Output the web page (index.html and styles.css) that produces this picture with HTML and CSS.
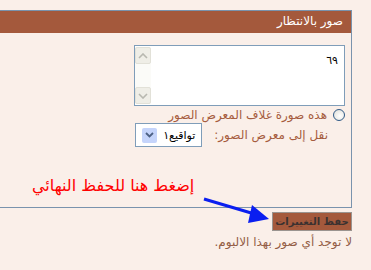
FILE: index.html
```html
<!DOCTYPE html>
<html lang="ar" dir="rtl">
<head>
  <meta charset="UTF-8">
  <title>صور بالانتظار</title>
  <link rel="stylesheet" href="styles.css">
</head>
<body>

<div class="panel">
  <div class="head">صور بالانتظار</div>
  <div class="content">

    <div class="textbox">
      <div class="text">٦٩</div>
      <div class="scroll">
        <span class="sbtn">
          <svg width="10" height="6" viewBox="0 0 10 6"><path d="M1 5 L5 1 L9 5" fill="none" stroke="#b8b8b0" stroke-width="1.6"/></svg>
        </span>
        <span class="sbtn">
          <svg width="10" height="6" viewBox="0 0 10 6"><path d="M1 1 L5 5 L9 1" fill="none" stroke="#b8b8b0" stroke-width="1.6"/></svg>
        </span>
      </div>
    </div>

    <div class="cover">
      <span class="radio"></span>
      <span class="label">هذه صورة غلاف المعرض الصور</span>
    </div>

    <div class="move">
      <span class="label">نقل إلى معرض الصور:</span>
      <div class="select">
        <span class="opt">تواقيع١</span>
        <span class="drop">
          <svg width="9" height="6" viewBox="0 0 9 6"><path d="M1 1 L4.5 4.5 L8 1" fill="none" stroke="#4d6185" stroke-width="1.8"/></svg>
        </span>
      </div>
    </div>

    <div class="note">إضغط هنا للحفظ النهائي</div>
  </div>
</div>

<svg class="arrow" width="80" height="30" viewBox="0 0 80 30">
  <line x1="2" y1="2" x2="56" y2="18" stroke="#0a1ef0" stroke-width="3"/>
  <polygon points="50,8 67,22 46,26" fill="#0a1ef0"/>
</svg>

<div class="actions">
  <button class="save">حفظ التغييرات</button>
</div>
<p class="empty">لا توجد أي صور بهذا الالبوم.</p>

</body>
</html>
```

FILE: styles.css
```css
body {
  margin: 0;
  background-color: #faefe9;
  font-family: "DejaVu Sans", sans-serif;
  font-size: 12px;
  width: 371px;
  position: relative;
}
.panel {
  margin-top: 10px;
  margin-right: 19px;
  border-top: 1px solid #7a93ad;
  border-right: 1px solid #7a93ad;
  border-bottom: 1px solid #7a93ad;
}
.head {
  height: 22px;
  line-height: 21px;
  background-color: #a4593c;
  color: #ffffff;
  padding-right: 8px;
}
.content {
  padding: 12px 6px 12px 0;
}
.textbox {
  width: 209px;
  height: 59px;
  border: 1px solid #7f9db9;
  background: #ffffff;
  display: flex;
}
.text {
  flex: 1;
  padding: 8px 6px 0 0;
  font-size: 11px;
}
.scroll {
  width: 16px;
  margin: 1px 1px 1px 0;
  background: #fbfbf8;
  display: flex;
  flex-direction: column;
  justify-content: space-between;
}
.sbtn {
  height: 15px;
  background: #efeee7;
  border: 1px solid #e2e1d8;
  border-radius: 2px;
  display: flex;
  align-items: center;
  justify-content: center;
}
.cover {
  display: flex;
  align-items: center;
  gap: 6px;
  margin-top: 1px;
  height: 16px;
}
.radio {
  width: 10px;
  height: 10px;
  border: 1px solid #2f5a87;
  border-radius: 50%;
  background: radial-gradient(circle at 60% 60%, #ffffff, #dcdcd6);
}
.label {
  color: #a65c3e;
  font-size: 12px;
}
.move {
  display: flex;
  align-items: center;
  gap: 12px;
  padding-right: 17px;
}
.select {
  width: 53px;
  height: 22px;
  border: 1px solid #7f9db9;
  background: #ffffff;
  display: flex;
  align-items: center;
  justify-content: space-between;
  padding: 0 6px;
}
.opt {
  font-size: 11px;
  color: #000000;
}
.drop {
  width: 15px;
  height: 15px;
  background: #c5d4fb;
  border-radius: 2px;
  display: flex;
  align-items: center;
  justify-content: center;
}
.note {
  color: #ff0000;
  font-size: 16px;
  margin-top: 29px;
  padding-left: 32px;
  text-align: left;
}
.arrow {
  position: absolute;
  left: 202px;
  top: 197px;
}
.actions {
  padding: 4px 19px 0 0;
}
.save {
  font-family: "DejaVu Sans", sans-serif;
  font-size: 10px;
  font-weight: bold;
  white-space: nowrap;
  color: #3a3130;
  background-color: #a4593c;
  border: 1px solid #9a9490;
  padding: 0;
  height: 19px;
  width: 80px;
}
.empty {
  margin: 4px 19px 0 0;
  color: #935d45;
  font-size: 12px;
}
```
